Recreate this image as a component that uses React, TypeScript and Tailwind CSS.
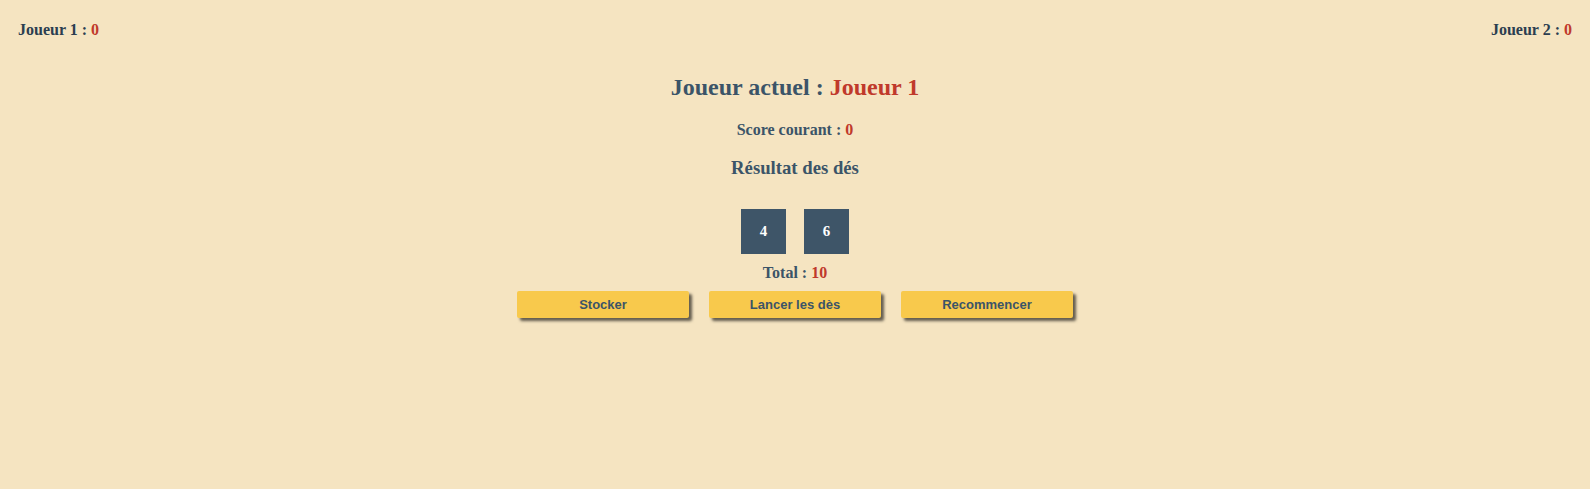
export default function App() {
  const dice = [4, 6];
  const total = dice.reduce((a, b) => a + b, 0);

  return (
    <div className="min-h-[489px] w-full bg-[#f5e4c1] font-['Liberation_Serif',serif] text-[#3b5468]">
      {/* Scores */}
      <div className="flex justify-between px-[18px] pt-[21px] text-[16px] leading-[18px] font-bold text-[#2c3e50]">
        <p>
          Joueur 1 : <span className="text-[#c0392b]">0</span>
        </p>
        <p>
          Joueur 2 : <span className="text-[#c0392b]">0</span>
        </p>
      </div>

      <div className="flex flex-col items-center">
        <h2 className="mt-[34px] text-[24px] leading-[28px] font-bold">
          Joueur actuel : <span className="text-[#c0392b]">Joueur 1</span>
        </h2>
        <p className="mt-[20px] text-[16px] leading-[18px] font-bold">
          Score courant : <span className="text-[#c0392b]">0</span>
        </p>
        <h3 className="mt-[18px] text-[18.72px] leading-[22px] font-bold">Résultat des dés</h3>

        {/* Dice */}
        <div className="mt-[30px] flex gap-[18px]">
          {dice.map((d, i) => (
            <div
              key={i}
              className="flex h-[45px] w-[45px] items-center justify-center bg-[#3e5568] text-[15px] font-bold text-white"
            >
              {d}
            </div>
          ))}
        </div>

        <p className="mt-[10px] text-[16px] leading-[18px] font-bold">
          Total : <span className="text-[#c0392b]">{total}</span>
        </p>

        {/* Actions */}
        <div className="mt-[9px] flex gap-[20px]">
          {["Stocker", "Lancer les dès", "Recommencer"].map((label) => (
            <button
              key={label}
              className="h-[27px] w-[172px] rounded-[2px] bg-[#f8c94c] font-['Liberation_Sans',sans-serif] text-[13px] font-bold text-[#3b5468] shadow-[3px_3px_3px_rgba(0,0,0,0.6)]"
            >
              {label}
            </button>
          ))}
        </div>
      </div>
    </div>
  );
}
